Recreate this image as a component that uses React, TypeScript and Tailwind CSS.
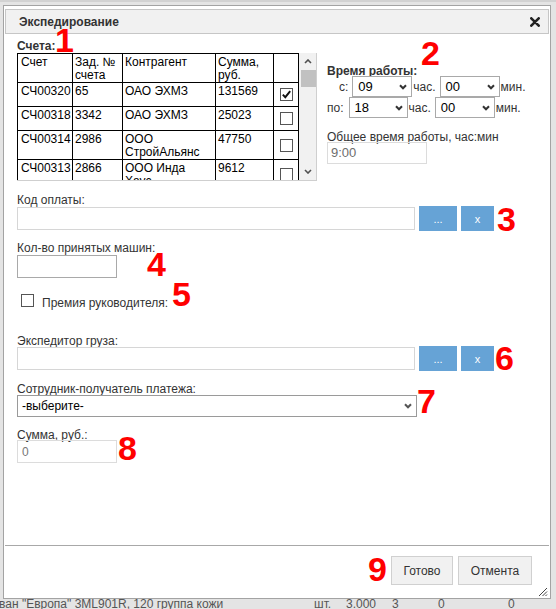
import React from "react";

function Chevron({ color = "#333" }: { color?: string }) {
  return (
    <svg width="8" height="6" viewBox="0 0 8 6" className="shrink-0">
      <path d="M1 1.2 L4 4.3 L7 1.2" fill="none" stroke={color} strokeWidth="2" />
    </svg>
  );
}

function TimeSelect({ value, className }: { value: string; className: string }) {
  return (
    <div
      className={
        "flex h-[21px] items-center justify-between border border-[#a9a9a9] bg-white pl-[5px] pr-[4px] text-[13px] leading-[15px] text-black " +
        className
      }
    >
      <span>{value}</span>
      <Chevron />
    </div>
  );
}

function Box({ checked }: { checked?: boolean }) {
  return (
    <span className="flex h-[13px] w-[13px] items-center justify-center border border-[#555] bg-white">
      {checked && (
        <svg width="11" height="11" viewBox="0 0 11 11">
          <path d="M1.8 5.6 L4.3 8.2 L9.2 2.2" fill="none" stroke="#111" strokeWidth="1.9" />
        </svg>
      )}
    </span>
  );
}

function BlueBtn({ label, className }: { label: string; className: string }) {
  return (
    <div
      className={
        "flex h-[25px] items-center justify-center bg-[#66a3d6] text-[11px] leading-[12px] text-white " + className
      }
    >
      {label}
    </div>
  );
}

function Red({ n, className }: { n: string; className: string }) {
  return (
    <span
      className={
        "pointer-events-none absolute text-[34px] font-bold leading-[34px] text-[#ff0000] " + className
      }
    >
      {n}
    </span>
  );
}

const cell = "border-r border-b border-black px-[2px] pt-[2px] text-left align-top";

export default function App() {
  const rows = [
    { a: "СЧ00320", b: "65", c: "ОАО ЭХМЗ", d: "131569", ch: true, h: "h-[24px]" },
    { a: "СЧ00318", b: "3342", c: "ОАО ЭХМЗ", d: "25023", ch: false, h: "h-[24px]" },
    { a: "СЧ00314", b: "2986", c: "ООО СтройАльянс", d: "47750", ch: false, h: "h-[29px]" },
    { a: "СЧ00313", b: "2866", c: "ООО Инда Хаус", d: "9612", ch: false, h: "h-[29px]" },
  ];

  return (
    <div className="relative h-[609px] w-[556px] overflow-hidden bg-[#e4e4e4] font-['Liberation_Sans',Arial,sans-serif] text-[12px] text-[#333]">
      {/* background page */}
      <div className="flex h-full flex-col">
        <div className="h-[2px] bg-[#d2d2d2]" />
        <div className="flex-1" />
        <div className="flex h-[12px] text-[12px] leading-[14px] text-[#555]">
          <span className="ml-[-1px] w-[315px] whitespace-nowrap">ван "Европа" 3ML901R, 120 группа кожи</span>
          <span className="w-[32px]">шт.</span>
          <span className="w-[46px]">3.000</span>
          <span className="w-[46px]">3</span>
          <span className="w-[70px]">0</span>
          <span>0</span>
        </div>
      </div>

      {/* dialog window */}
      <div className="absolute left-[3px] top-[5px] flex h-[594px] w-[548px] flex-col border border-[#a3a3a3] bg-white px-[1px] pt-[3px]">
        {/* title bar */}
        <div className="flex h-[25px] items-center justify-between border border-[#c6c6c6] bg-[#f1f1f1] pl-[13px] pr-[8px]">
          <span className="text-[12px] font-bold leading-[14px] text-[#333]">Экспедирование</span>
          <svg width="10" height="10" viewBox="0 0 10 10">
            <path d="M1.3 1.3 L8.7 8.7 M8.7 1.3 L1.3 8.7" stroke="#222" strokeWidth="2.6" strokeLinecap="round" />
          </svg>
        </div>

        {/* content */}
        <div className="flex h-[511px] flex-col pl-[12px] pt-[5px]">
          {/* top section */}
          <div className="flex h-[142px]">
            <div className="flex flex-col">
              <div className="h-[14px] font-bold leading-[14px] text-[#333]">Счета:</div>
              <div className="flex h-[128px] w-[300px] overflow-hidden border-r border-b border-[#cfcfcf]">
                <div className="h-[127px] w-[282px] overflow-hidden">
                  <div className="grid w-[282px] grid-cols-[55px_50px_93px_58px_25px] border-l border-t border-black text-[12px] leading-[13px] text-black">
                    <div className={cell + " h-[29px] pl-[3px]"}>Счет</div>
                    <div className={cell + " h-[29px]"}>Зад. № счета</div>
                    <div className={cell + " h-[29px]"}>Контрагент</div>
                    <div className={cell + " h-[29px]"}>Сумма, руб.</div>
                    <div className={cell + " h-[29px]"} />
                    {rows.map((r) => (
                      <React.Fragment key={r.a}>
                        <div className={cell + " pl-[3px] " + r.h}>{r.a}</div>
                        <div className={cell + " " + r.h}>{r.b}</div>
                        <div className={cell + " " + r.h}>{r.c}</div>
                        <div className={cell + " " + r.h}>{r.d}</div>
                        <div className={"flex items-center justify-center border-r border-b border-black " + r.h}>
                          <Box checked={r.ch} />
                        </div>
                      </React.Fragment>
                    ))}
                  </div>
                </div>
                {/* scrollbar */}
                <div className="flex w-[17px] flex-col items-center bg-[#f1f1f1]">
                  <div className="flex h-[17px] items-center justify-center">
                    <svg width="8" height="5" viewBox="0 0 8 5">
                      <path d="M1 4 L4 1 L7 4" fill="none" stroke="#505050" strokeWidth="1.6" />
                    </svg>
                  </div>
                  <div className="ml-[1px] h-[17px] w-[15px] bg-[#c1c1c1]" />
                  <div className="flex-1" />
                  <div className="flex h-[17px] items-center justify-center">
                    <svg width="8" height="5" viewBox="0 0 8 5">
                      <path d="M1 1 L4 4 L7 1" fill="none" stroke="#505050" strokeWidth="1.6" />
                    </svg>
                  </div>
                </div>
              </div>
            </div>

            {/* working time */}
            <div className="ml-[10px] flex flex-col pt-[26px]">
              <div className="h-[11px] font-bold leading-[12px] text-[#333]">Время работы:</div>
              <div className="flex h-[21px] items-center">
                <span className="pl-[12px]">с:</span>
                <TimeSelect value="09" className="ml-[4px] w-[60px]" />
                <span className="ml-[1px]">час.</span>
                <TimeSelect value="00" className="ml-[4px] w-[60px]" />
                <span className="ml-[1px]">мин.</span>
              </div>
              <div className="flex h-[21px] items-center">
                <span>по:</span>
                <TimeSelect value="18" className="ml-[5px] w-[59px]" />
                <span className="ml-[1px]">час.</span>
                <TimeSelect value="00" className="ml-[4px] w-[60px]" />
                <span className="ml-[1px]">мин.</span>
              </div>
              <div className="mt-[13px] h-[11px] leading-[12px]">Общее время работы, час:мин</div>
              <div className="flex h-[22px] w-[100px] items-center border border-[#dcdcdc] pl-[3px] text-[13px] text-[#6d6d6d]">
                9:00
              </div>
            </div>
          </div>

          {/* payment code */}
          <div className="mt-[12px] h-[13px] leading-[14px]">Код оплаты:</div>
          <div className="flex h-[25px] items-center">
            <div className="h-[23px] w-[398px] border border-[#d6d6d6] bg-white" />
            <BlueBtn label="..." className="ml-[4px] w-[38px]" />
            <BlueBtn label="x" className="ml-[4px] w-[33px]" />
          </div>

          {/* cars */}
          <div className="mt-[10px] h-[14px] leading-[14px]">Кол-во принятых машин:</div>
          <div className="h-[23px] w-[100px] border border-[#a9a9a9] bg-white" />

          {/* bonus */}
          <div className="mt-[16px] flex h-[16px] items-start pl-[4px]">
            <Box />
            <span className="ml-[8px] mt-[2px] leading-[14px]">Премия руководителя:</span>
          </div>

          {/* forwarder */}
          <div className="mt-[24px] h-[12px] leading-[14px]">Экспедитор груза:</div>
          <div className="flex h-[25px] items-center">
            <div className="h-[23px] w-[398px] border border-[#d6d6d6] bg-white" />
            <BlueBtn label="..." className="ml-[4px] w-[38px]" />
            <BlueBtn label="x" className="ml-[4px] w-[33px]" />
          </div>

          {/* employee */}
          <div className="mt-[11px] h-[13px] leading-[14px]">Сотрудник-получатель платежа:</div>
          <div className="flex h-[22px] w-[400px] items-center justify-between border border-[#9a9a9a] bg-white pl-[4px] pr-[4px] text-[12px] text-black">
            <span>-выберите-</span>
            <Chevron color="#555" />
          </div>

          {/* sum */}
          <div className="mt-[11px] h-[12px] leading-[14px]">Сумма, руб.:</div>
          <div className="flex h-[23px] w-[100px] items-center border border-[#dcdcdc] pl-[4px] text-[12px] text-[#777]">
            0
          </div>
        </div>

        {/* footer */}
        <div className="relative flex flex-1 justify-end border-t border-[#a8a8a8] pr-[17px] pt-[10px]">
          <div className="flex h-[29px] w-[62px] items-center justify-center border border-[#d0d0d0] bg-[#f1f1f1] text-[12px] text-[#333]">
            Готово
          </div>
          <div className="ml-[5px] flex h-[29px] w-[74px] items-center justify-center border border-[#d0d0d0] bg-[#f1f1f1] text-[12px] text-[#333]">
            Отмента
          </div>
          <svg width="10" height="10" viewBox="0 0 10 10" className="absolute bottom-[1px] right-[1px]">
            <path d="M9 1 L1 9 M9 4.5 L4.5 9 M9 7.5 L7.5 9" stroke="#444" strokeWidth="1" />
          </svg>
        </div>
      </div>

      {/* red annotation numbers */}
      <Red n="1" className="left-[55px] top-[23px]" />
      <Red n="2" className="left-[421px] top-[36px]" />
      <Red n="3" className="left-[497px] top-[202px]" />
      <Red n="4" className="left-[147px] top-[247px]" />
      <Red n="5" className="left-[172px] top-[277px]" />
      <Red n="6" className="left-[495px] top-[341px]" />
      <Red n="7" className="left-[417px] top-[384px]" />
      <Red n="8" className="left-[118px] top-[431px]" />
      <Red n="9" className="left-[368px] top-[552px]" />
    </div>
  );
}
